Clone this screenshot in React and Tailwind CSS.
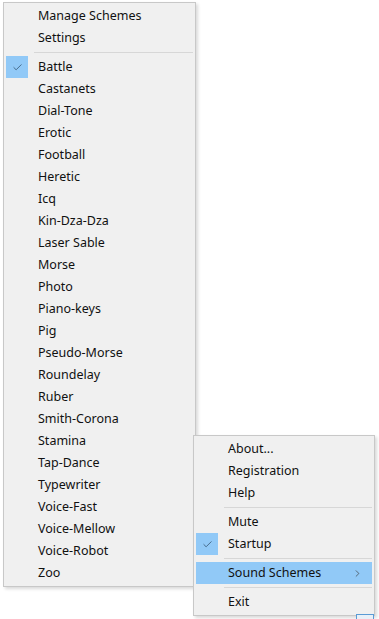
import { Check, ChevronRight } from 'lucide-react'

const schemes = [
  'Battle', 'Castanets', 'Dial-Tone', 'Erotic', 'Football', 'Heretic', 'Icq',
  'Kin-Dza-Dza', 'Laser Sable', 'Morse', 'Photo', 'Piano-keys', 'Pig',
  'Pseudo-Morse', 'Roundelay', 'Ruber', 'Smith-Corona', 'Stamina', 'Tap-Dance',
  'Typewriter', 'Voice-Fast', 'Voice-Mellow', 'Voice-Robot', 'Zoo',
]

function Item({ label, checked, active, sub }) {
  return (
    <div className={`flex items-center h-[22px] mx-[2px] ${active ? 'bg-[#91c9f7]' : ''}`}>
      <div className={`w-[22px] h-[22px] shrink-0 flex items-center justify-center ${checked ? 'bg-[#91c9f7]' : ''}`}>
        {checked && <Check size={11} strokeWidth={1.6} className="text-[#2c4a66]" />}
      </div>
      <span className="ml-[10px] text-[12.5px] leading-none text-[#111]">{label}</span>
      {sub && <ChevronRight size={11} strokeWidth={1.4} className="ml-auto mr-[9px] text-[#333]" />}
    </div>
  )
}

function Sep() {
  return <div className="h-[7px] flex items-center pl-[30px] pr-[2px]"><div className="h-px w-full bg-[#d7d7d7]" /></div>
}

// floating popup menus overlap each other, so they are positioned
function Menu({ className, children }) {
  return (
    <div className={`absolute bg-[#f0f0f0] border border-[#c8c8c8] shadow-[2px_2px_3px_rgba(0,0,0,0.15)] py-[2px] ${className}`}>
      {children}
    </div>
  )
}

export default function App() {
  return (
    <div className="relative w-[379px] h-[619px] bg-white overflow-hidden font-['Noto_Sans',sans-serif]">
      <Menu className="left-[3px] top-[2px] w-[193px]">
        <Item label="Manage Schemes" />
        <Item label="Settings" />
        <Sep />
        {schemes.map(s => <Item key={s} label={s} checked={s === 'Battle'} />)}
      </Menu>

      <Menu className="left-[193px] top-[435px] w-[182px]">
        <Item label="About..." />
        <Item label="Registration" />
        <Item label="Help" />
        <Sep />
        <Item label="Mute" />
        <Item label="Startup" checked />
        <Sep />
        <Item label="Sound Schemes" active sub />
        <Sep />
        <Item label="Exit" />
      </Menu>

      <div className="absolute left-[356px] top-[614px] w-[18px] h-[5px] border-t border-l border-r border-[#5a9bd5] bg-[#e8f0f8]" />
    </div>
  )
}
